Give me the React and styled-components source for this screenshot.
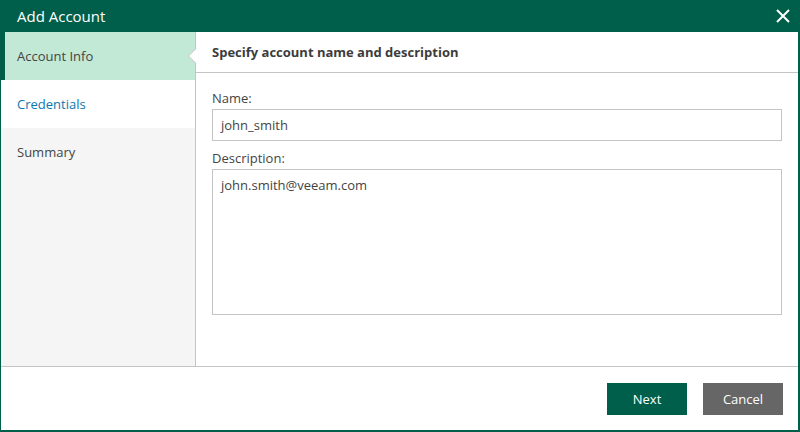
import styled, { createGlobalStyle } from 'styled-components';

const GlobalStyle = createGlobalStyle`
  html, body {
    margin: 0;
    padding: 0;
    background: #ffffff;
  }
  * {
    box-sizing: border-box;
  }
`;

const green = '#005f4b';
const line = '#c4c4c4';

const Window = styled.div`
  width: 800px;
  height: 432px;
  display: flex;
  flex-direction: column;
  font-family: 'Open Sans', 'Noto Sans', sans-serif;
  font-size: 13px;
  color: #444444;
  border-left: 1px solid ${green};
  border-right: 2px solid ${green};
  border-bottom: 2px solid ${green};
  background: #ffffff;
`;

const TitleBar = styled.div`
  height: 32px;
  flex: none;
  margin: 0 -2px 0 -1px;
  background: ${green};
  color: #ffffff;
  display: flex;
  align-items: center;
  justify-content: space-between;
  padding: 0 9px 0 17px;
  font-size: 15px;
`;

const CloseButton = styled.button`
  width: 16px;
  height: 16px;
  padding: 0;
  border: none;
  background: none;
  cursor: pointer;
  display: flex;
  align-items: center;
  justify-content: center;
`;

const Body = styled.div`
  flex: 1;
  display: flex;
  min-height: 0;
`;

const Sidebar = styled.nav`
  width: 195px;
  flex: none;
  background: #f5f5f5;
  border-right: 1px solid ${line};
  display: flex;
  flex-direction: column;
`;

const Step = styled.div`
  position: relative;
  height: 48px;
  display: flex;
  align-items: center;
  padding-left: ${(p) => (p.$active ? '12px' : '16px')};
  border-left: ${(p) => (p.$active ? `4px solid ${green}` : 'none')};
  background: ${(p) => (p.$active ? '#c2e8d6' : p.$next ? '#ffffff' : 'transparent')};
  color: ${(p) => (p.$next ? '#0a78b0' : '#444444')};

  ${(p) =>
    p.$active &&
    `
    &::before {
      content: '';
      position: absolute;
      right: -1px;
      top: 16px;
      border-style: solid;
      border-width: 8px 8px 8px 0;
      border-color: transparent ${line} transparent transparent;
    }
    &::after {
      content: '';
      position: absolute;
      right: -1px;
      top: 17px;
      border-style: solid;
      border-width: 7px 7px 7px 0;
      border-color: transparent #ffffff transparent transparent;
    }
  `}
`;

const Main = styled.section`
  flex: 1;
  display: flex;
  flex-direction: column;
`;

const Header = styled.div`
  height: 41px;
  flex: none;
  display: flex;
  align-items: center;
  padding-left: 16px;
  border-bottom: 1px solid ${line};
  font-weight: 700;
  font-size: 13px;
  color: #3c3c3c;
`;

const Form = styled.div`
  display: flex;
  flex-direction: column;
  padding: 16px 16px 0 16px;
`;

const Label = styled.label`
  line-height: 18px;
  margin-bottom: 2px;
`;

const Input = styled.div`
  height: 32px;
  border: 1px solid ${line};
  display: flex;
  align-items: center;
  padding-left: 8px;
  margin-bottom: 8px;
`;

const TextArea = styled.div`
  height: 146px;
  border: 1px solid ${line};
  padding: 6px 8px;
`;

const Footer = styled.div`
  height: 64px;
  flex: none;
  border-top: 1px solid ${line};
  display: flex;
  justify-content: flex-end;
  align-items: flex-start;
  gap: 16px;
  padding: 16px 15px 0 0;
`;

const Button = styled.button`
  width: 80px;
  height: 32px;
  border: none;
  font-family: inherit;
  font-size: 13px;
  color: #ffffff;
  background: ${(p) => (p.$primary ? green : '#666666')};
  cursor: pointer;
`;

export default function App() {
  return (
    <>
      <GlobalStyle />
      <Window>
        <TitleBar>
          Add Account
          <CloseButton aria-label='Close'>
            <svg width='14' height='14' viewBox='0 0 14 14'>
              <path d='M1 1 L13 13 M13 1 L1 13' stroke='#ffffff' strokeWidth='2' />
            </svg>
          </CloseButton>
        </TitleBar>
        <Body>
          <Sidebar>
            <Step $active>Account Info</Step>
            <Step $next>Credentials</Step>
            <Step>Summary</Step>
          </Sidebar>
          <Main>
            <Header>Specify account name and description</Header>
            <Form>
              <Label>Name:</Label>
              <Input>john_smith</Input>
              <Label>Description:</Label>
              <TextArea>john.smith@veeam.com</TextArea>
            </Form>
          </Main>
        </Body>
        <Footer>
          <Button $primary>Next</Button>
          <Button>Cancel</Button>
        </Footer>
      </Window>
    </>
  );
}
